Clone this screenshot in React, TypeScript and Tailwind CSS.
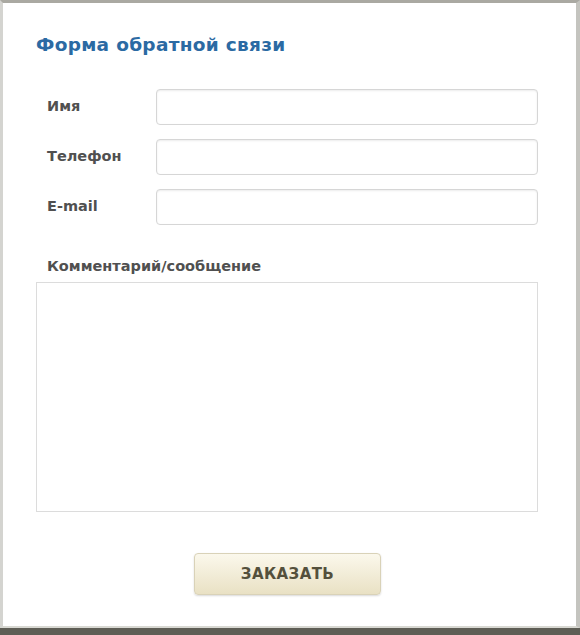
export default function App() {
  const fields = ["Имя", "Телефон", "E-mail"];
  return (
    <div className="w-[580px] h-[635px] bg-[#5e5d55]" style={{ fontFamily: '"DejaVu Sans", Verdana, sans-serif' }}>
      <div className="h-[628px] bg-white border-t-[3px] border-t-[#aaa9a2] border-l-[3px] border-l-[#d4d4d0] border-r-[4px] border-r-[#c4c4bf] border-b-[2px] border-b-[#d8d8d2] flex flex-col">
        <h2 className="text-[18.5px] font-bold text-[#2b6aa3] pl-[33px] pt-[31px] leading-[22px] tracking-[0.3px]">Форма обратной связи</h2>

        <div className="flex flex-col gap-[14px] mt-[33px]">
          {fields.map((f) => (
            <div key={f} className="flex items-center">
              <label className="w-[153px] shrink-0 pl-[44px] text-[14.5px] text-[#505050] font-semibold">{f}</label>
              <div className="w-[382px] h-[36px] rounded-[4px] border border-[#d6d6d6] shadow-[inset_0_1px_2px_rgba(0,0,0,0.08)] bg-white" />
            </div>
          ))}
        </div>

        <div className="pl-[44px] mt-[31px] text-[14.5px] text-[#505050] font-semibold">Комментарий/сообщение</div>
        <div className="ml-[33px] mt-[4px] w-[502px] h-[230px] border border-[#dcdcdc] bg-white" />

        <div className="flex justify-center mt-[41px] pr-[4px]">
          <button className="w-[187px] h-[42px] rounded-[4px] border border-[#d9d2b8] bg-gradient-to-b from-[#fbf8ec] to-[#e9e1c4] shadow-[0_1px_2px_rgba(0,0,0,0.15)] text-[15px] font-semibold text-[#54503c] tracking-[0.4px]">
            ЗАКАЗАТЬ
          </button>
        </div>
      </div>
    </div>
  );
}
